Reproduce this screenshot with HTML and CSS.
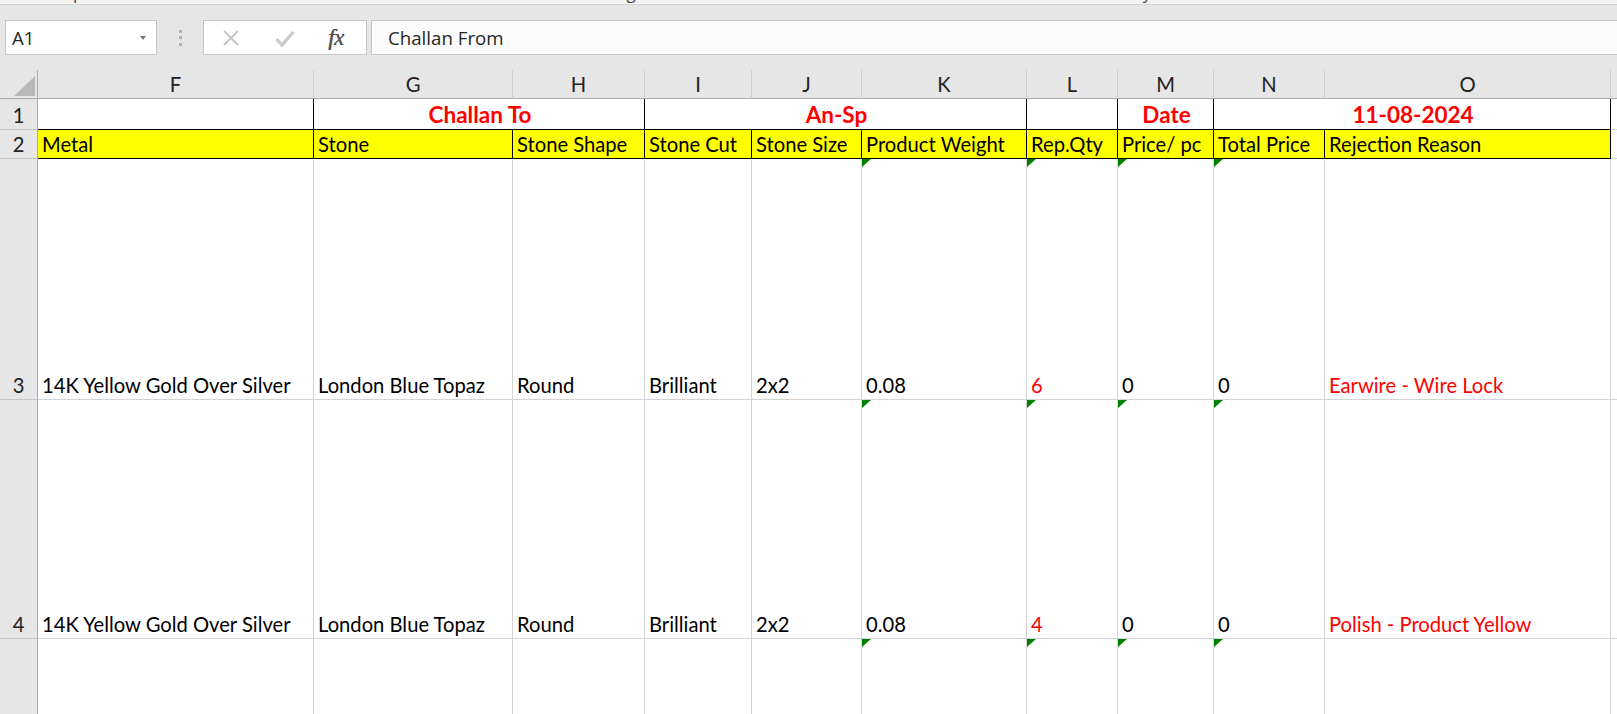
FILE: index.html
```html
<!DOCTYPE html>
<html lang="en">
<head>
<meta charset="utf-8">
<title>Challan</title>
<link rel="stylesheet" href="styles.css">
</head>
<body>
<div class="app">
  <div class="topstrip">
    <span class="frag frag-p">p</span><span class="frag frag-g">g</span><span class="frag frag-y">y</span>
  </div>
  <div class="fbar">
    <div class="namebox">
      <span class="nb-text">A1</span>
      <span class="nb-arrow"></span>
    </div>
    <div class="grip"><i></i><i></i><i></i></div>
    <div class="fbtns">
      <svg class="ic-x" width="18" height="16" viewBox="0 0 18 16"><path d="M2 1 L16 15 M16 1 L2 15" stroke="#c6c6c6" stroke-width="2" fill="none"/></svg>
      <svg class="ic-check" width="20" height="18" viewBox="0 0 20 18"><path d="M1.5 9 L7 15 L18.5 2" stroke="#cacaca" stroke-width="3.2" fill="none"/></svg>
      <span class="ic-fx">fx</span>
    </div>
    <div class="finput">Challan From</div>
  </div>

  <div class="sheet">
    <!-- header row -->
    <div class="corner"><span class="corner-tri"></span></div>
    <div class="ch">F</div>
    <div class="ch">G</div>
    <div class="ch">H</div>
    <div class="ch">I</div>
    <div class="ch">J</div>
    <div class="ch">K</div>
    <div class="ch">L</div>
    <div class="ch">M</div>
    <div class="ch">N</div>
    <div class="ch">O</div>
    <div class="ch"></div>

    <!-- row 1 -->
    <div class="rh">1</div>
    <div class="c r1 bb br"></div>
    <div class="c r1 bb br title span2">Challan To</div>
    <div class="c r1 bb br title span3">An-Sp</div>
    <div class="c r1 bb br"></div>
    <div class="c r1 bb br title">Date</div>
    <div class="c r1 bb br title span2">11-08-2024</div>
    <div class="c"></div>

    <!-- row 2 -->
    <div class="rh">2</div>
    <div class="c hd">Metal</div>
    <div class="c hd">Stone</div>
    <div class="c hd">Stone Shape</div>
    <div class="c hd">Stone Cut</div>
    <div class="c hd">Stone Size</div>
    <div class="c hd">Product Weight</div>
    <div class="c hd">Rep.Qty</div>
    <div class="c hd">Price/ pc</div>
    <div class="c hd">Total Price</div>
    <div class="c hd">Rejection Reason</div>
    <div class="c"></div>

    <!-- row 3 -->
    <div class="rh">3</div>
    <div class="c">14K Yellow Gold Over Silver</div>
    <div class="c">London Blue Topaz</div>
    <div class="c">Round</div>
    <div class="c">Brilliant</div>
    <div class="c">2x2</div>
    <div class="c txtnum">0.08</div>
    <div class="c txtnum red">6</div>
    <div class="c txtnum">0</div>
    <div class="c txtnum">0</div>
    <div class="c red">Earwire - Wire Lock</div>
    <div class="c"></div>

    <!-- row 4 -->
    <div class="rh">4</div>
    <div class="c">14K Yellow Gold Over Silver</div>
    <div class="c">London Blue Topaz</div>
    <div class="c">Round</div>
    <div class="c">Brilliant</div>
    <div class="c">2x2</div>
    <div class="c txtnum">0.08</div>
    <div class="c txtnum red">4</div>
    <div class="c txtnum">0</div>
    <div class="c txtnum">0</div>
    <div class="c red">Polish - Product Yellow</div>
    <div class="c"></div>

    <!-- row 5 -->
    <div class="rh"></div>
    <div class="c"></div>
    <div class="c"></div>
    <div class="c"></div>
    <div class="c"></div>
    <div class="c"></div>
    <div class="c txtnum"></div>
    <div class="c txtnum"></div>
    <div class="c txtnum"></div>
    <div class="c txtnum"></div>
    <div class="c"></div>
    <div class="c"></div>
  </div>
</div>
</body>
</html>
```

FILE: styles.css
```css
* { box-sizing: border-box; }

html, body {
  margin: 0;
  padding: 0;
  background: #ffffff;
}

.app {
  width: 1617px;
  height: 714px;
  overflow: hidden;
  font-family: Lato, "Liberation Sans", sans-serif;
}

/* thin strip at very top with clipped descenders */
.topstrip {
  height: 5px;
  background: #f3f3f3;
  border-bottom: 1px solid #d4d4d4;
  overflow: hidden;
  display: flex;
  font-family: "Open Sans", sans-serif;
  font-size: 17px;
  color: #444;
}
.frag {
  line-height: 18px;
  margin-top: -16px;
}
.frag-p { margin-left: 73px; }
.frag-g { margin-left: 543px; }
.frag-y { margin-left: 507px; }

/* formula bar */
.fbar {
  height: 65px;
  background: #e6e6e6;
  display: flex;
  align-items: flex-start;
  padding: 15px 0 0 5px;
  font-family: "Open Sans", "Noto Sans", sans-serif;
  font-size: 18.7px;
  color: #262626;
}
.namebox {
  width: 152px;
  height: 35px;
  background: #fff;
  border: 1px solid #c6c6c6;
  display: flex;
  align-items: center;
  justify-content: space-between;
  padding: 0 10px 0 6px;
}
.nb-text { line-height: 33px; }
.nb-arrow {
  width: 0;
  height: 0;
  border-left: 3.5px solid transparent;
  border-right: 3.5px solid transparent;
  border-top: 4px solid #7a7a7a;
  margin-top: 1px;
}
.grip {
  width: 46px;
  height: 35px;
  display: flex;
  flex-direction: column;
  align-items: center;
  justify-content: center;
  gap: 3.5px;
}
.grip i {
  display: block;
  width: 3px;
  height: 3px;
  background: #b0b0b0;
}
.fbtns {
  width: 164px;
  height: 35px;
  background: #fff;
  border: 1px solid #c6c6c6;
  display: flex;
  align-items: center;
  padding-left: 18px;
}
.ic-x { margin-right: 35px; }
.ic-check { margin-right: 33px; margin-top: 2px; }
.ic-fx {
  font-family: "Liberation Serif", "DejaVu Serif", serif;
  font-style: italic;
  font-size: 23px;
  color: #555;
  line-height: 33px;
  letter-spacing: -0.5px;
  text-shadow: 0.4px 0 0 #555;
}
.finput {
  flex: 1;
  margin-left: 4px;
  margin-right: -10px;
  height: 35px;
  background: #fcfcfc;
  border: 1px solid #c6c6c6;
  line-height: 33px;
  padding-left: 16px;
}

/* sheet grid */
.sheet {
  display: grid;
  grid-template-columns: 38px 276px 199px 132px 107px 110px 165px 91px 96px 111px 286px 1fr;
  grid-template-rows: 29px 31px 29px 241px 239px 120px;
  font-size: 20.2px;
  line-height: 22px;
  color: #000;
}

.corner {
  background: #e6e6e6;
  border-right: 1px solid #ababab;
  border-bottom: 1px solid #ababab;
  position: relative;
}
.corner-tri {
  position: absolute;
  right: 2px;
  bottom: 2px;
  width: 0;
  height: 0;
  border-bottom: 20px solid #b9b9b9;
  border-left: 21px solid transparent;
}

.ch {
  background: #e6e6e6;
  border-right: 1px solid #cfcfcf;
  border-bottom: 1px solid #ababab;
  display: flex;
  align-items: flex-end;
  justify-content: center;
  padding-bottom: 3px;
  color: #222;
}

.rh {
  background: #e6e6e6;
  border-right: 1px solid #ababab;
  border-bottom: 1px solid #c3c3c3;
  display: flex;
  align-items: flex-end;
  justify-content: center;
  padding-bottom: 3px;
  color: #222;
}

.c {
  border-right: 1px solid #d4d4d4;
  border-bottom: 1px solid #d4d4d4;
  display: flex;
  align-items: flex-end;
  padding: 0 2px 3px 4px;
  white-space: nowrap;
  overflow: hidden;
  position: relative;
}

.r1 { background: #fff; }
.bb { border-bottom-color: #000; }
.br { border-right-color: #000; }

.title {
  justify-content: center;
  font-weight: 700;
  font-size: 22.5px;
  color: #ff0000;
  padding-bottom: 3px;
}
.span2 { grid-column: span 2; }
.span3 { grid-column: span 3; }

.hd {
  background: #ffff00;
  border-right-color: #000;
  border-bottom-color: #000;
}

.red { color: #ff0000; }

.txtnum::before {
  content: "";
  position: absolute;
  top: 0;
  left: 0;
  width: 0;
  height: 0;
  border-top: 8px solid #008000;
  border-right: 9px solid transparent;
}
```
